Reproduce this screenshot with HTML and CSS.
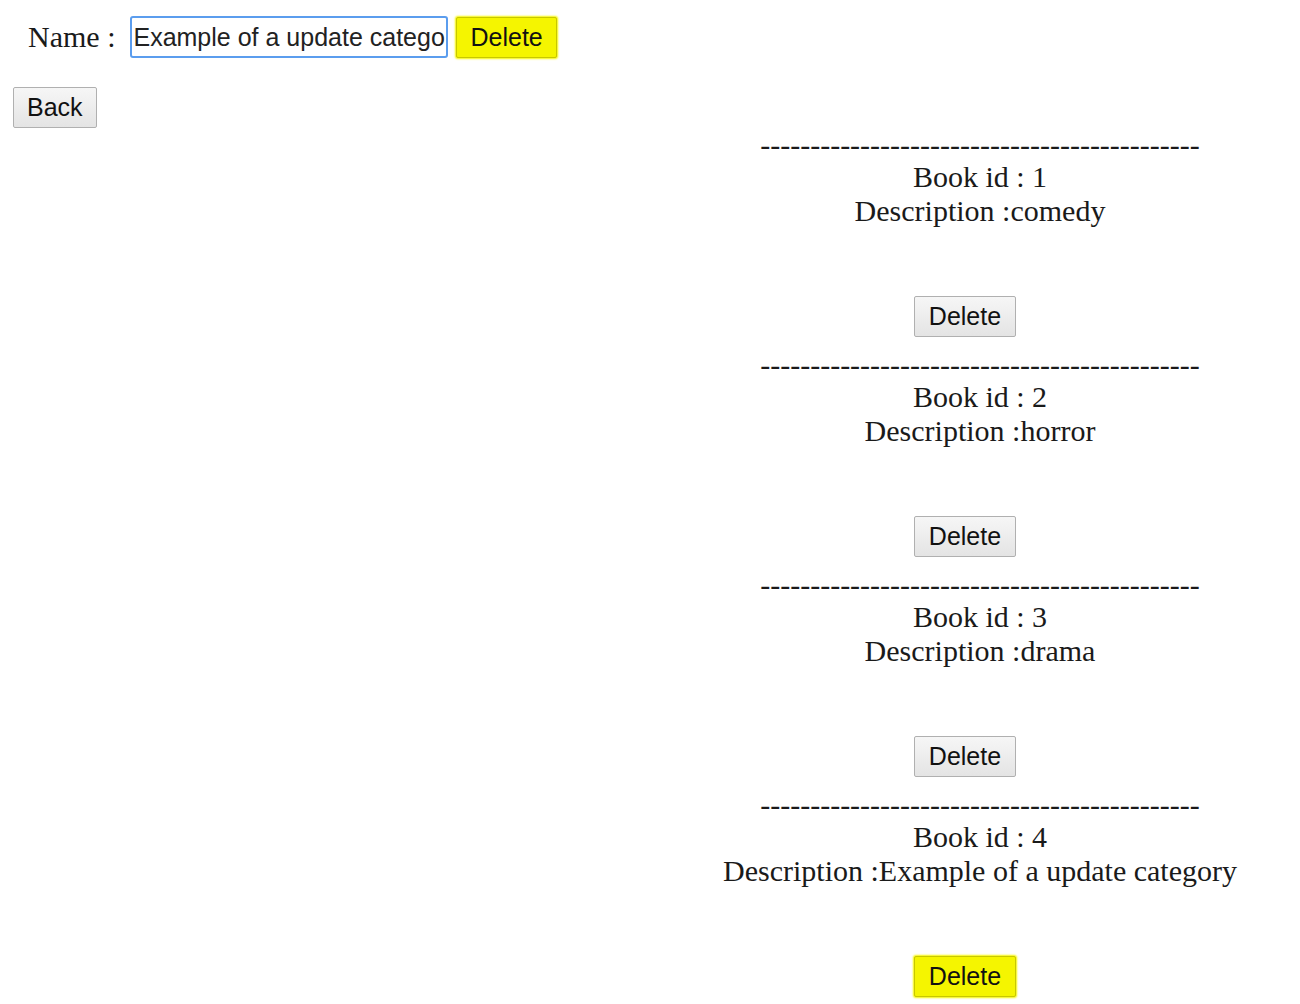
FILE: index.html
```html
<!DOCTYPE html>
<html lang="en">
<head>
    <meta charset="UTF-8">
    <title>Categorias</title>
    <link rel="stylesheet" href="styles.css">
</head>
<body>
    <div class="formulario">
        <label for="nombre">Name :</label>
        <input type="text" id="nombre" value="Example of a update category">
        <button class="boton marcado">Delete</button>
    </div>

    <button class="boton volver">Back</button>

    <div class="lista">
        <div class="libro">
            <div class="rayas">--------------------------------------------</div>
            <div>Book id : 1</div>
            <div>Description :comedy</div>
            <button class="boton">Delete</button>
        </div>
        <div class="libro">
            <div class="rayas">--------------------------------------------</div>
            <div>Book id : 2</div>
            <div>Description :horror</div>
            <button class="boton">Delete</button>
        </div>
        <div class="libro">
            <div class="rayas">--------------------------------------------</div>
            <div>Book id : 3</div>
            <div>Description :drama</div>
            <button class="boton">Delete</button>
        </div>
        <div class="libro">
            <div class="rayas">--------------------------------------------</div>
            <div>Book id : 4</div>
            <div>Description :Example of a update category</div>
            <button class="boton marcado">Delete</button>
        </div>
    </div>
</body>
</html>
```

FILE: styles.css
```css
body {
    font-family: "Liberation Serif", "Times New Roman", serif;
    font-size: 30px;
    color: #1a1a1a;
    background-color: #fff;
    margin: 13px;
}

.formulario {
    display: flex;
    align-items: center;
    gap: 8px;
    margin-left: 15px;
    margin-top: 3px;
}

.formulario label {
    margin-right: 7px;
}

.formulario input {
    font-family: "Liberation Sans", Arial, sans-serif;
    font-size: 25px;
    width: 318px;
    height: 42px;
    box-sizing: border-box;
    padding: 2px 1px;
    border: 2px solid #5b9dee;
    border-radius: 3px;
    color: #222;
    outline: none;
}

.boton {
    font-family: "Liberation Sans", Arial, sans-serif;
    font-size: 25px;
    color: #111;
    height: 41px;
    padding: 0 14px;
    border: 1px solid #b0b0b0;
    border-radius: 2px;
    background: linear-gradient(#f6f6f6, #e4e4e4);
}

.formulario .boton {
    padding: 0 13px;
}

.volver {
    margin-top: 29px;
    padding: 0 13px;
}

.lista {
    width: 640px;
    margin-left: auto;
    margin-right: -13px;
    text-align: center;
}

.libro {
    height: 220px;
    line-height: 34px;
}

.rayas {
    margin-bottom: -2px;
}

.libro .boton {
    margin-top: 68px;
    margin-right: 30px;
}

.marcado {
    background: #f5f500;
    border-color: #c8c800;
    box-shadow: 0 0 2px 1px #f5f500;
}
```
